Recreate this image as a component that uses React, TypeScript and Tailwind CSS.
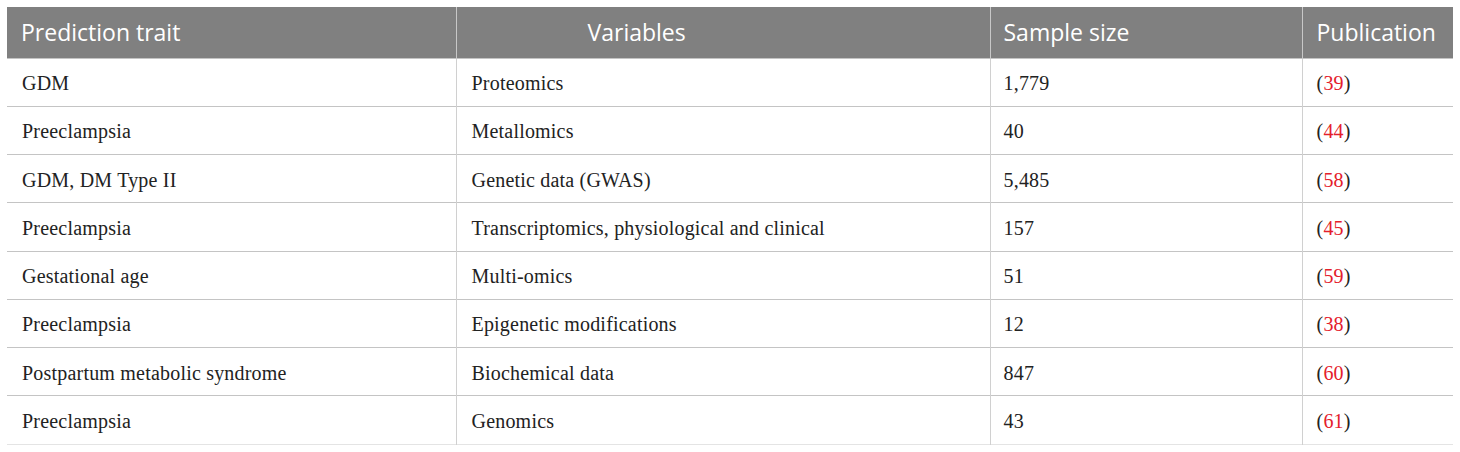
const rows: [string, string, string, string][] = [
  ["GDM", "Proteomics", "1,779", "39"],
  ["Preeclampsia", "Metallomics", "40", "44"],
  ["GDM, DM Type II", "Genetic data (GWAS)", "5,485", "58"],
  ["Preeclampsia", "Transcriptomics, physiological and clinical", "157", "45"],
  ["Gestational age", "Multi-omics", "51", "59"],
  ["Preeclampsia", "Epigenetic modifications", "12", "38"],
  ["Postpartum metabolic syndrome", "Biochemical data", "847", "60"],
  ["Preeclampsia", "Genomics", "43", "61"],
];

export default function App() {
  return (
    <div className="w-[1460px] h-[452px] bg-white pt-[7px] pl-[7px]">
      <table className="border-collapse table-fixed w-[1446px]">
        <colgroup>
          <col className="w-[449px]" />
          <col className="w-[534px]" />
          <col className="w-[312px]" />
          <col className="w-[151px]" />
        </colgroup>
        <thead>
          <tr className="bg-[#808080] text-white text-[23px] font-['Open_Sans',sans-serif] h-[51px]">
            <th className="text-left font-normal pl-[14px] border-r border-[#c8c8c8]">Prediction trait</th>
            <th className="text-left font-normal pl-[131px] border-r border-[#c8c8c8]">Variables</th>
            <th className="text-left font-normal pl-[13px] border-r border-[#c8c8c8]">Sample size</th>
            <th className="text-left font-normal pl-[14px]">Publication</th>
          </tr>
        </thead>
        <tbody className="font-['Liberation_Serif',serif] text-[20px] tracking-[0.2px] text-[#222]">
          {rows.map((r, i) => (
            <tr key={i} className="h-[48.25px] border-t border-[#c4c4c4] last:border-b last:border-b-[#e4e4e4]">
              <td className="pl-[15px] pt-[2px] border-r border-[#d0d0d0]">{r[0]}</td>
              <td className="pl-[15px] pt-[2px] border-r border-[#d0d0d0]">{r[1]}</td>
              <td className="pl-[13px] pt-[2px] border-r border-[#d0d0d0]">{r[2]}</td>
              <td className="pl-[14px] pt-[2px]">
                (<span className="text-[#e4202b]">{r[3]}</span>)
              </td>
            </tr>
          ))}
        </tbody>
      </table>
    </div>
  );
}
